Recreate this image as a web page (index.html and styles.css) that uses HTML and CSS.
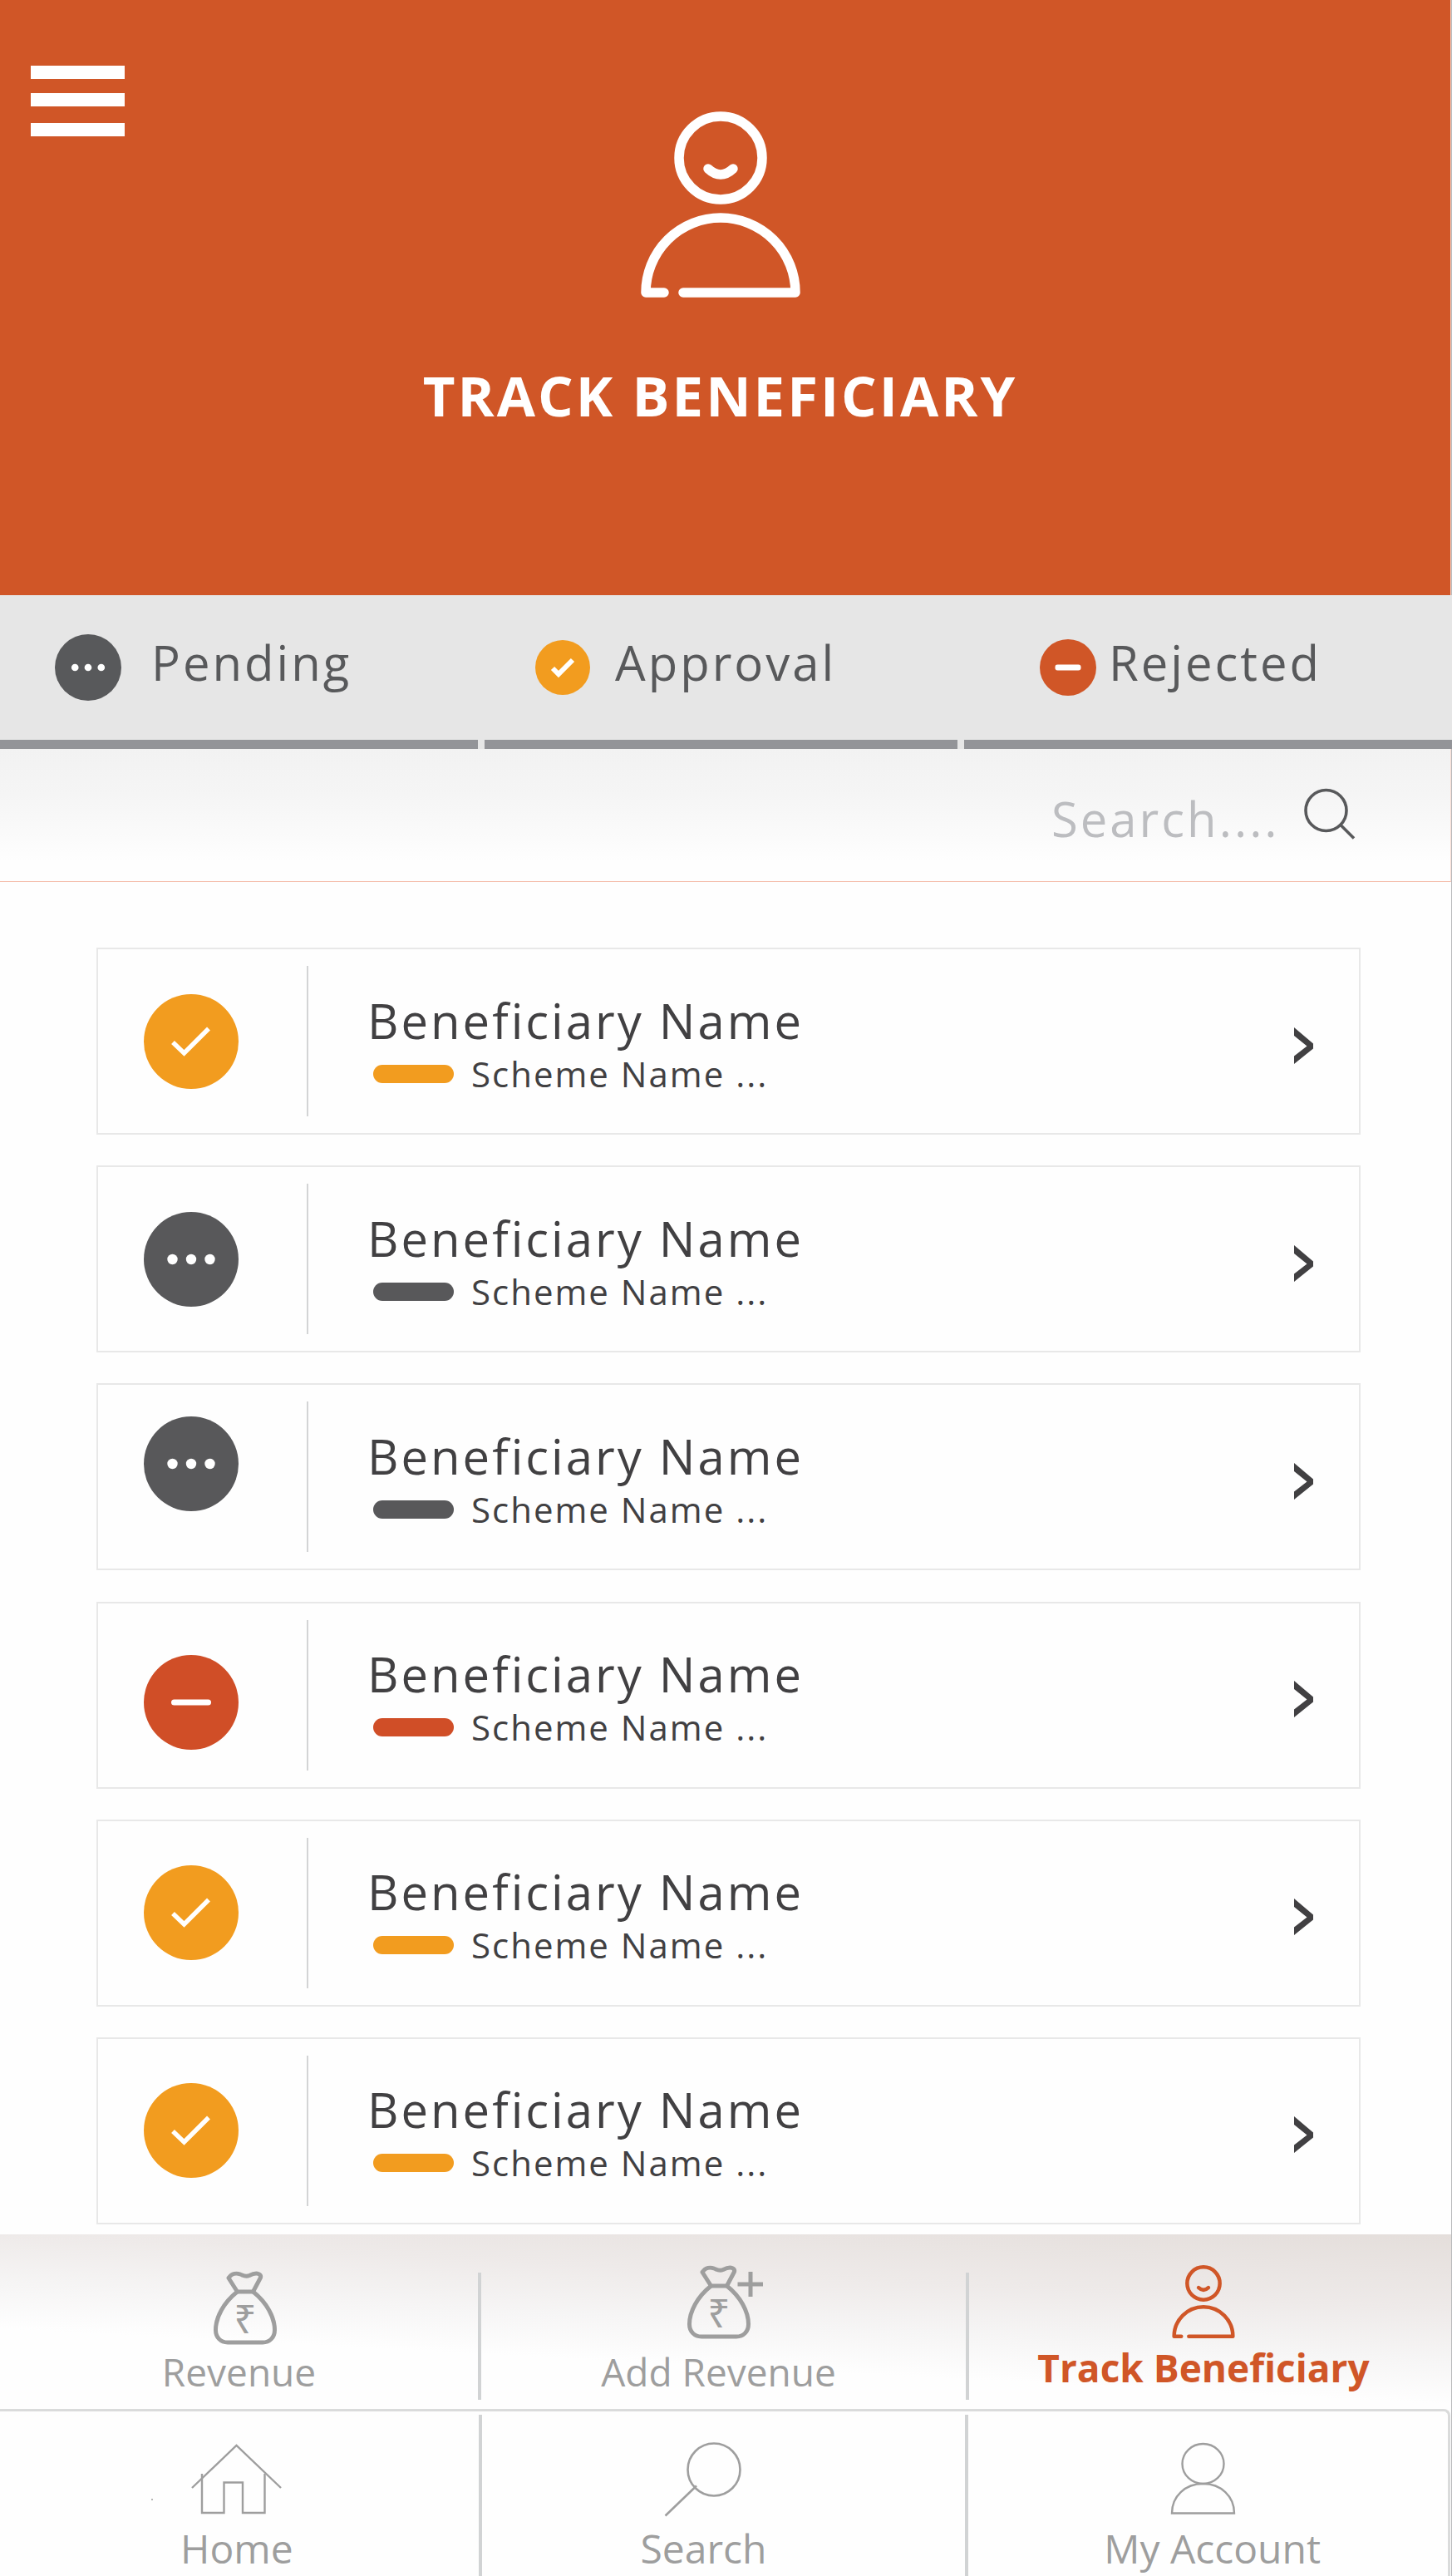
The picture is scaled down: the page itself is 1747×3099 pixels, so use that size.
FILE: index.html
```html
<!DOCTYPE html>
<html lang="en">
<head>
<meta charset="utf-8">
<meta name="viewport" content="width=device-width, initial-scale=1">
<title>Track Beneficiary</title>
<link rel="stylesheet" href="styles.css">
</head>
<body>
<svg class="sprite" aria-hidden="true">
  <symbol id="person" viewBox="0 0 192 224">
    <g fill="none" stroke="currentColor" stroke-width="11.5" stroke-linecap="round" stroke-linejoin="round">
      <circle cx="96" cy="56" r="50"/>
      <path d="M81 69Q96 83 111 69"/>
      <path d="M28 218H6A90 90 0 0 1 186 218H51"/>
    </g>
  </symbol>
  <symbol id="bag" viewBox="0 0 76 90">
    <g fill="none" stroke="currentColor" stroke-width="5" stroke-linejoin="round">
      <path d="M28.500 25L18 8.500C22 2.500 28 2.500 32 4C36 5.500 38 7.500 43 5.500C48 3 51 2.500 54 3.500C56.500 4.500 57 6 56.500 8L47.500 25Z"/>
      <path d="M28.500 25C12 38 2.500 56 2.500 71C2.500 80 8.500 86 17 86H59C67.500 86 73.500 80 73.500 71C73.500 56 64 38 47.500 25"/>
    </g>
    <text x="38" y="75" text-anchor="middle" class="rupee">₹</text>
  </symbol>
  <symbol id="check" viewBox="0 0 114 114">
    <circle cx="57" cy="57" r="57" fill="currentColor"/>
    <path d="M35 58L48.500 71L78 41.500" fill="none" stroke="#fff" stroke-width="5.500"/>
  </symbol>
  <symbol id="dots" viewBox="0 0 114 114">
    <circle cx="57" cy="57" r="57" fill="currentColor"/>
    <g fill="#fff"><circle cx="34.500" cy="57" r="6.200"/><circle cx="57" cy="57" r="6.200"/><circle cx="79.500" cy="57" r="6.200"/></g>
  </symbol>
  <symbol id="minus" viewBox="0 0 114 114">
    <circle cx="57" cy="57" r="57" fill="currentColor"/>
    <rect x="33" y="53.500" width="48" height="7" rx="3.500" fill="#fff"/>
  </symbol>
  <symbol id="chevron" viewBox="0 0 24 44">
    <path d="M0 0L23 19.500V25.500L0 44V34.500L15.500 22.500L0 10Z" fill="currentColor"/>
  </symbol>
</svg>

<div class="page">
  <header class="header">
    <button class="menu" type="button" aria-label="Menu">
      <svg width="113" height="85" viewBox="0 0 113 85"><path d="M0 0H113V16H0ZM0 33H113V49H0ZM0 69H113V85H0Z" fill="#fff"/></svg>
    </button>
    <svg class="hero-icon" width="192" height="224" aria-hidden="true"><use href="#person"/></svg>
    <h1 class="title">TRACK BENEFICIARY</h1>
  </header>

  <div class="tabs">
    <button class="tab tab--pending" type="button">
      <svg width="80" height="80" aria-hidden="true"><use href="#dots"/></svg>
      <span class="tab-label">Pending</span>
    </button>
    <button class="tab tab--approval" type="button">
      <svg width="66" height="66" viewBox="0 0 66 66" aria-hidden="true"><circle cx="33" cy="33" r="33" fill="#f29c1f"/><path d="M21 34L28 41L45 24" fill="none" stroke="#fff" stroke-width="6"/></svg>
      <span class="tab-label">Approval</span>
    </button>
    <button class="tab tab--rejected" type="button">
      <svg width="68" height="68" viewBox="0 0 68 68" aria-hidden="true"><circle cx="34" cy="34" r="34" fill="#d05627"/><rect x="18.500" y="30.500" width="31" height="7" rx="3" fill="#fff"/></svg>
      <span class="tab-label">Rejected</span>
    </button>
  </div>

  <form class="search" role="search">
    <input class="search-input" type="search" placeholder="Search...." aria-label="Search">
    <button class="search-button" type="submit" aria-label="Search">
      <svg width="64" height="64" viewBox="0 0 64 64"><g fill="none" stroke="#58595b" stroke-width="3.600"><circle cx="28.500" cy="28" r="24.500"/><path d="M45.500 45L62 61.500"/></g></svg>
    </button>
  </form>

  <main class="content">
    <ul class="list">
      <li><a class="card card--approved" href="#">
        <span class="status"><svg width="114" height="114" role="img" aria-label="Approved"><use href="#check"/></svg></span>
        <span class="details"><span class="name">Beneficiary Name</span><span class="scheme"><span class="pill"></span>Scheme Name ...</span></span>
        <svg class="chevron" width="24" height="44" aria-hidden="true"><use href="#chevron"/></svg>
      </a></li>
      <li><a class="card card--pending" href="#">
        <span class="status"><svg width="114" height="114" role="img" aria-label="Pending"><use href="#dots"/></svg></span>
        <span class="details"><span class="name">Beneficiary Name</span><span class="scheme"><span class="pill"></span>Scheme Name ...</span></span>
        <svg class="chevron" width="24" height="44" aria-hidden="true"><use href="#chevron"/></svg>
      </a></li>
      <li><a class="card card--pending" href="#">
        <span class="status status--high"><svg width="114" height="114" role="img" aria-label="Pending"><use href="#dots"/></svg></span>
        <span class="details"><span class="name">Beneficiary Name</span><span class="scheme"><span class="pill"></span>Scheme Name ...</span></span>
        <svg class="chevron" width="24" height="44" aria-hidden="true"><use href="#chevron"/></svg>
      </a></li>
      <li><a class="card card--rejected" href="#">
        <span class="status status--low"><svg width="114" height="114" role="img" aria-label="Rejected"><use href="#minus"/></svg></span>
        <span class="details"><span class="name">Beneficiary Name</span><span class="scheme"><span class="pill"></span>Scheme Name ...</span></span>
        <svg class="chevron" width="24" height="44" aria-hidden="true"><use href="#chevron"/></svg>
      </a></li>
      <li><a class="card card--approved" href="#">
        <span class="status"><svg width="114" height="114" role="img" aria-label="Approved"><use href="#check"/></svg></span>
        <span class="details"><span class="name">Beneficiary Name</span><span class="scheme"><span class="pill"></span>Scheme Name ...</span></span>
        <svg class="chevron" width="24" height="44" aria-hidden="true"><use href="#chevron"/></svg>
      </a></li>
      <li><a class="card card--approved" href="#">
        <span class="status"><svg width="114" height="114" role="img" aria-label="Approved"><use href="#check"/></svg></span>
        <span class="details"><span class="name">Beneficiary Name</span><span class="scheme"><span class="pill"></span>Scheme Name ...</span></span>
        <svg class="chevron" width="24" height="44" aria-hidden="true"><use href="#chevron"/></svg>
      </a></li>
    </ul>
  </main>

  <nav class="actions" aria-label="Actions">
    <a class="nav-item" href="#">
      <svg width="88" height="96" viewBox="0 0 88 96" aria-hidden="true"><use href="#bag" x="13" y="7" width="76" height="90"/></svg>
      <span>Revenue</span>
    </a>
    <span class="divider"></span>
    <a class="nav-item nav-item--add" href="#">
      <svg width="108" height="96" viewBox="-16 0 108 96" aria-hidden="true"><use href="#bag" width="76" height="90"/><path d="M60.500 23H91M76 8V38" fill="none" stroke="currentColor" stroke-width="5"/></svg>
      <span>Add Revenue</span>
    </a>
    <span class="divider"></span>
    <a class="nav-item nav-item--current" href="#" aria-current="page">
      <svg width="76" height="91" viewBox="0 0 76 91" aria-hidden="true"><use href="#person" width="76" height="88"/></svg>
      <span>Track Beneficiary</span>
    </a>
  </nav>

  <nav class="main-nav" aria-label="Main">
    <a class="nav-item nav-item--home" href="#">
      <svg width="110" height="88" viewBox="0 0 110 88" aria-hidden="true"><g fill="none" stroke="currentColor" stroke-width="2.400"><path d="M1 54L54.500 3L108 54"/><path d="M13 37V84H39.500V47.500H62V84H88.500V37"/></g><circle cx="-47" cy="68" r="1" fill="currentColor"/></svg>
      <span>Home</span>
    </a>
    <span class="divider"></span>
    <a class="nav-item nav-item--search" href="#">
      <svg width="94" height="88" viewBox="0 0 94 88" aria-hidden="true"><g fill="none" stroke="currentColor" stroke-width="2.600"><circle cx="60" cy="32" r="31.500"/><path d="M39 51.500L1.500 87.500"/></g></svg>
      <span>Search</span>
    </a>
    <span class="divider"></span>
    <a class="nav-item nav-item--account" href="#">
      <svg width="102" height="88" viewBox="0 0 102 88" aria-hidden="true"><g fill="none" stroke="currentColor" stroke-width="2.400"><ellipse cx="39.500" cy="25" rx="25" ry="24"/><path d="M2 84.500C2 64 18 49 39.500 49S77 64 77 84.500Z"/></g></svg>
      <span>My Account</span>
    </a>
  </nav>
</div>
</body>
</html>
```
FILE: styles.css
```css
* {
  box-sizing: border-box;
}

body {
  margin: 0;
  background: #fefefe;
  color: #414042;
  font-family: "Open Sans", "Noto Sans", sans-serif;
}

button {
  margin: 0;
  padding: 0;
  border: 0;
  background: none;
  font: inherit;
  color: inherit;
}

a {
  color: inherit;
  text-decoration: none;
}

svg {
  display: block;
  flex: none;
  overflow: visible;
}

.sprite {
  position: absolute;
  width: 0;
  height: 0;
}

.rupee {
  font-size: 48px;
  fill: currentColor;
}

.page {
  display: flex;
  flex-direction: column;
  min-height: 100vh;
  border-right: 1px solid #b9babc;
}

/* Header */
.header {
  display: grid;
  grid-template-columns: 1fr auto 1fr;
  align-items: start;
  align-content: start;
  padding: 79px 12px 201px 0;
  background: #d05627;
  border-right: 1px solid #f6d5c9;
}

.menu {
  margin-left: 37px;
  justify-self: start;
}

.hero-icon {
  margin-top: 55px;
  color: #fff;
}

.title {
  grid-column: 1 / -1;
  margin: 77px 0 0;
  text-align: center;
  color: #fff;
  font-size: 67px;
  font-weight: 700;
  line-height: 80px;
  letter-spacing: 3px;
}

/* Status tabs */
.tabs {
  display: grid;
  grid-template-columns: 575fr 569fr 587fr;
  gap: 8px;
  margin-right: -1px;
  background: #e6e6e6;
}

.tab {
  display: flex;
  align-items: center;
  height: 185px;
  border-bottom: 11px solid #939498;
  color: #58595b;
  font-size: 58px;
  line-height: 80px;
  letter-spacing: 3px;
}

.tab-label {
  padding-bottom: 12px;
}

.tab--pending {
  gap: 36px;
  padding-left: 66px;
}

.tab--approval {
  gap: 30px;
  padding-left: 61px;
}

.tab--rejected {
  gap: 15px;
  padding-left: 91px;
}

/* Search bar */
.search {
  display: flex;
  align-items: center;
  justify-content: flex-end;
  gap: 2px;
  height: 160px;
  padding-right: 114px;
  background: linear-gradient(#f2f2f2, #f5f5f5 35%, #fefefe 85%);
  border-right: 1px solid #f9dcd2;
  border-bottom: 1px solid #f5bfae;
}

.search-input {
  width: 300px;
  padding: 8px 0 0;
  border: 0;
  outline: 0;
  background: none;
  color: #58595b;
  font: 58px/80px "Open Sans", "Noto Sans", sans-serif;
  letter-spacing: 3px;
  appearance: none;
}

.search-input::placeholder {
  color: #bcbdc0;
  opacity: 1;
}

.search-button {
  padding-bottom: 4px;
}

/* Beneficiary list */
.content {
  display: flex;
  flex: 1;
  padding: 79px 109px 12px 116px;
}

.list {
  display: flex;
  flex: 1;
  flex-direction: column;
  justify-content: space-between;
  gap: 16px;
  margin: 0;
  padding: 0;
  list-style: none;
}

.card {
  display: flex;
  align-items: center;
  height: 225px;
  padding: 0 54px;
  border: 2px solid #e8e8e8;
}

.status {
  display: flex;
  align-items: center;
  height: 181px;
  padding: 0 82px 0 1px;
  border-right: 2px solid #d3d4d5;
}

.status--high {
  padding-bottom: 32px;
}

.status--low {
  padding-top: 18px;
}

.card--approved .status,
.card--approved .pill {
  color: #f29c1f;
}

.card--pending .status,
.card--pending .pill {
  color: #58585a;
}

.card--rejected .status,
.card--rejected .pill {
  color: #d04e27;
}

.details {
  display: flex;
  flex: 1;
  flex-direction: column;
  gap: 9px;
  padding: 9px 0 0 71px;
}

.name {
  font-size: 58px;
  line-height: 60px;
  letter-spacing: 3px;
}

.scheme {
  display: flex;
  align-items: center;
  gap: 21px;
  padding-left: 7px;
  font-size: 42px;
  line-height: 50px;
  letter-spacing: 2px;
}

.pill {
  width: 97px;
  height: 22px;
  border-radius: 11px;
  background: currentColor;
}

.chevron {
  margin-top: 10px;
}

/* Bottom navigation */
.actions,
.main-nav {
  display: grid;
  color: #9e9e9e;
  line-height: 60px;
}

.actions {
  grid-template-columns: 575fr 4px 583fr 4px 580fr;
  height: 210px;
  font-size: 46px;
  background: linear-gradient(183deg, #e4dedb, #eeeae9 30%, #f6f5f5 50%, #fefefe 68%);
}

.main-nav {
  grid-template-columns: 576fr 4px 582fr 4px 577fr;
  height: 201px;
  margin-right: 1px;
  border: solid #dadbdb;
  border-width: 3px 3px 0 0;
  border-top-right-radius: 8px;
  font-size: 48px;
}

.divider {
  background: #d1d3d4;
}

.actions .divider {
  margin: 46px 0 11px;
}

.main-nav .divider {
  margin-top: 4px;
}

.nav-item {
  display: flex;
  flex-direction: column;
  align-items: center;
  white-space: nowrap;
}

.actions .nav-item {
  gap: 2px;
  padding-top: 37px;
}

.main-nav .nav-item {
  gap: 9px;
  padding-top: 38px;
}

.actions .nav-item--add {
  padding-right: 12px;
}

.actions .nav-item--current {
  padding-right: 16px;
  color: #d05627;
  font-weight: 700;
}

.main-nav .nav-item--home {
  padding-right: 6px;
}

.main-nav .nav-item--search {
  padding-right: 48px;
}

.main-nav .nav-item--account {
  padding-left: 10px;
}
```
